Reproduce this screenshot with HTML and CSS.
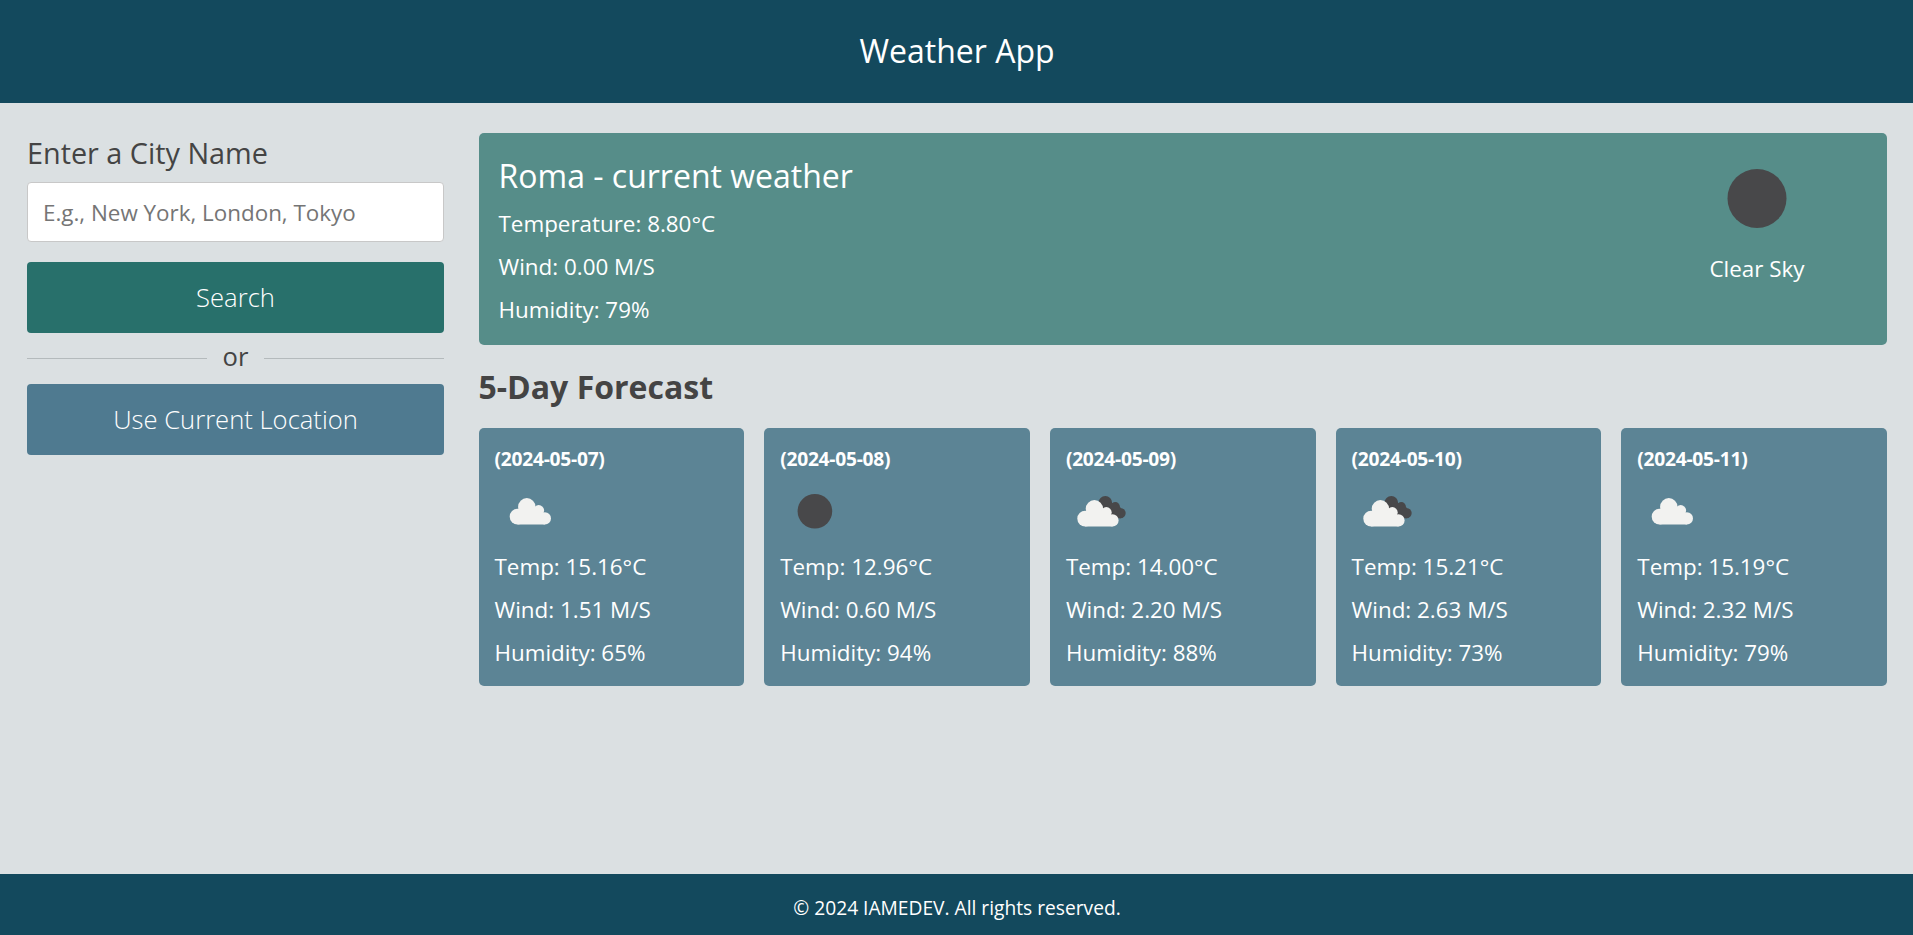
FILE: index.html
```html
<!DOCTYPE html>
<html lang="en">
<head>
<meta charset="utf-8">
<title>Weather App</title>
<link rel="stylesheet" href="styles.css">
</head>
<body>
<svg class="defs" width="0" height="0" aria-hidden="true">
  <symbol id="cloud" viewBox="0 0 70 67">
    <g fill="#f2f2f0"><circle cx="22.6" cy="38.7" r="7.9"/><circle cx="31.8" cy="28.8" r="8.7"/><circle cx="43.7" cy="32.5" r="5.4"/><circle cx="49.9" cy="40.4" r="6.1"/><path d="M22.6 31h19l8.3 6v9.5H22.6z"/></g>
  </symbol>
  <symbol id="clear" viewBox="0 0 70 67"><circle cx="34.9" cy="33.2" r="17.3" fill="#48484a"/></symbol>
  <symbol id="broken" viewBox="0 0 70 67">
    <g fill="#48484a"><circle cx="39.3" cy="24.8" r="6.8"/><circle cx="49.3" cy="28.7" r="4.6"/><circle cx="54.5" cy="35.1" r="5.2"/><path d="M38 25h11l6 5v10.3h-8z"/></g>
    <g fill="#f2f2f0" transform="translate(-3.4 2)"><circle cx="22.6" cy="38.7" r="7.9"/><circle cx="31.8" cy="28.8" r="8.7"/><circle cx="43.7" cy="32.5" r="5.4"/><circle cx="49.9" cy="40.4" r="6.1"/><path d="M22.6 31h19l8.3 6v9.5H22.6z"/></g>
  </symbol>
</svg>
<header class="header"><h1>Weather App</h1></header>
<main class="container">
  <section class="search">
    <h3>Enter a City Name</h3>
    <input class="city-input" type="text" placeholder="E.g., New York, London, Tokyo">
    <button class="btn search-btn">Search</button>
    <div class="separator"><span>or</span></div>
    <button class="btn location-btn">Use Current Location</button>
  </section>
  <section class="weather">
    <div class="current">
      <div class="details">
        <h2>Roma - current weather</h2>
        <p>Temperature: 8.80°C</p><p>Wind: 0.00 M/S</p><p>Humidity: 79%</p>
      </div>
      <div class="sky">
        <svg width="120" height="97" viewBox="0 0 120 97"><circle cx="60" cy="48.4" r="29.5" fill="#48484a"/></svg>
        <p>Clear Sky</p>
      </div>
    </div>
    <h2 class="forecast-title">5-Day Forecast</h2>
    <ul class="cards">
      <li class="card"><h3>(2024-05-07)</h3><svg class="icon"><use href="#cloud"/></svg><p>Temp: 15.16°C</p><p>Wind: 1.51 M/S</p><p>Humidity: 65%</p></li>
      <li class="card"><h3>(2024-05-08)</h3><svg class="icon"><use href="#clear"/></svg><p>Temp: 12.96°C</p><p>Wind: 0.60 M/S</p><p>Humidity: 94%</p></li>
      <li class="card"><h3>(2024-05-09)</h3><svg class="icon"><use href="#broken"/></svg><p>Temp: 14.00°C</p><p>Wind: 2.20 M/S</p><p>Humidity: 88%</p></li>
      <li class="card"><h3>(2024-05-10)</h3><svg class="icon"><use href="#broken"/></svg><p>Temp: 15.21°C</p><p>Wind: 2.63 M/S</p><p>Humidity: 73%</p></li>
      <li class="card"><h3>(2024-05-11)</h3><svg class="icon"><use href="#cloud"/></svg><p>Temp: 15.19°C</p><p>Wind: 2.32 M/S</p><p>Humidity: 79%</p></li>
    </ul>
  </section>
</main>
<footer class="footer"><p>© 2024 IAMEDEV. All rights reserved.</p></footer>
</body>
</html>
```

FILE: styles.css
```css
* { margin: 0; padding: 0; box-sizing: border-box; }
body { min-height: 100vh; display: flex; flex-direction: column; background: #dbe0e2; color: #444; font-family: "Open Sans", sans-serif; }
.defs { position: absolute; }
svg { display: block; }
.header { height: 103px; background: #13495d; color: #fff; text-align: center; }
.header h1 { font-size: 32px; font-weight: 400; line-height: 101px; padding-left: 1px; }
.container { flex: 1; display: grid; grid-template-columns: 417px 1fr; gap: 34.5px; padding: 30px 26px 0 27px; align-items: start; }
.search { display: flex; flex-direction: column; }
.search h3 { font-size: 28.8px; font-weight: 400; line-height: 39px; margin-bottom: 10px; }
.city-input { height: 60px; padding: 0 15px; border: 1px solid #c8c8c8; border-radius: 4px; background: #fff; font: 400 22.4px "Open Sans", sans-serif; outline: none; }
.city-input::placeholder { color: #757575; }
.btn { height: 71px; border: 0; border-radius: 4px; color: #fff; font: 300 25.6px "Open Sans", sans-serif; }
.search-btn { margin-top: 20px; background: #28706b; }
.location-btn { background: #4f7a90; }
.separator { display: flex; align-items: center; gap: 15.5px; height: 51px; font-size: 25.6px; line-height: 35px; }
.separator::before, .separator::after { content: ""; flex: 1; height: 1px; background: #b4babc; }
.separator span { padding-bottom: 4px; }
.current { display: flex; justify-content: space-between; height: 212px; padding: 17px 70px 14px 20px; border-radius: 5px; background: #568d89; color: #fff; }
.current h2 { font-size: 32px; font-weight: 400; line-height: 51px; margin-bottom: 1px; }
.current p, .card p { font-size: 22.4px; line-height: 43px; }
.sky { text-align: center; }
.forecast-title { font-size: 32px; font-weight: 700; line-height: 83px; }
.cards { display: grid; grid-template-columns: repeat(5, 1fr); gap: 20px; list-style: none; }
.card { height: 258px; padding: 11px 16px; border-radius: 5px; background: #5c8495; color: #fff; }
.card h3 { font-size: 19.2px; font-weight: 700; line-height: 40px; letter-spacing: -0.25px; }
.icon { width: 70px; height: 67px; margin-top: -1px; }
.footer { height: 61px; padding-top: 6px; background: #13495d; color: #fff; text-align: center; }
.footer p { font-size: 19.2px; line-height: 56px; padding-left: 1px; }
```
